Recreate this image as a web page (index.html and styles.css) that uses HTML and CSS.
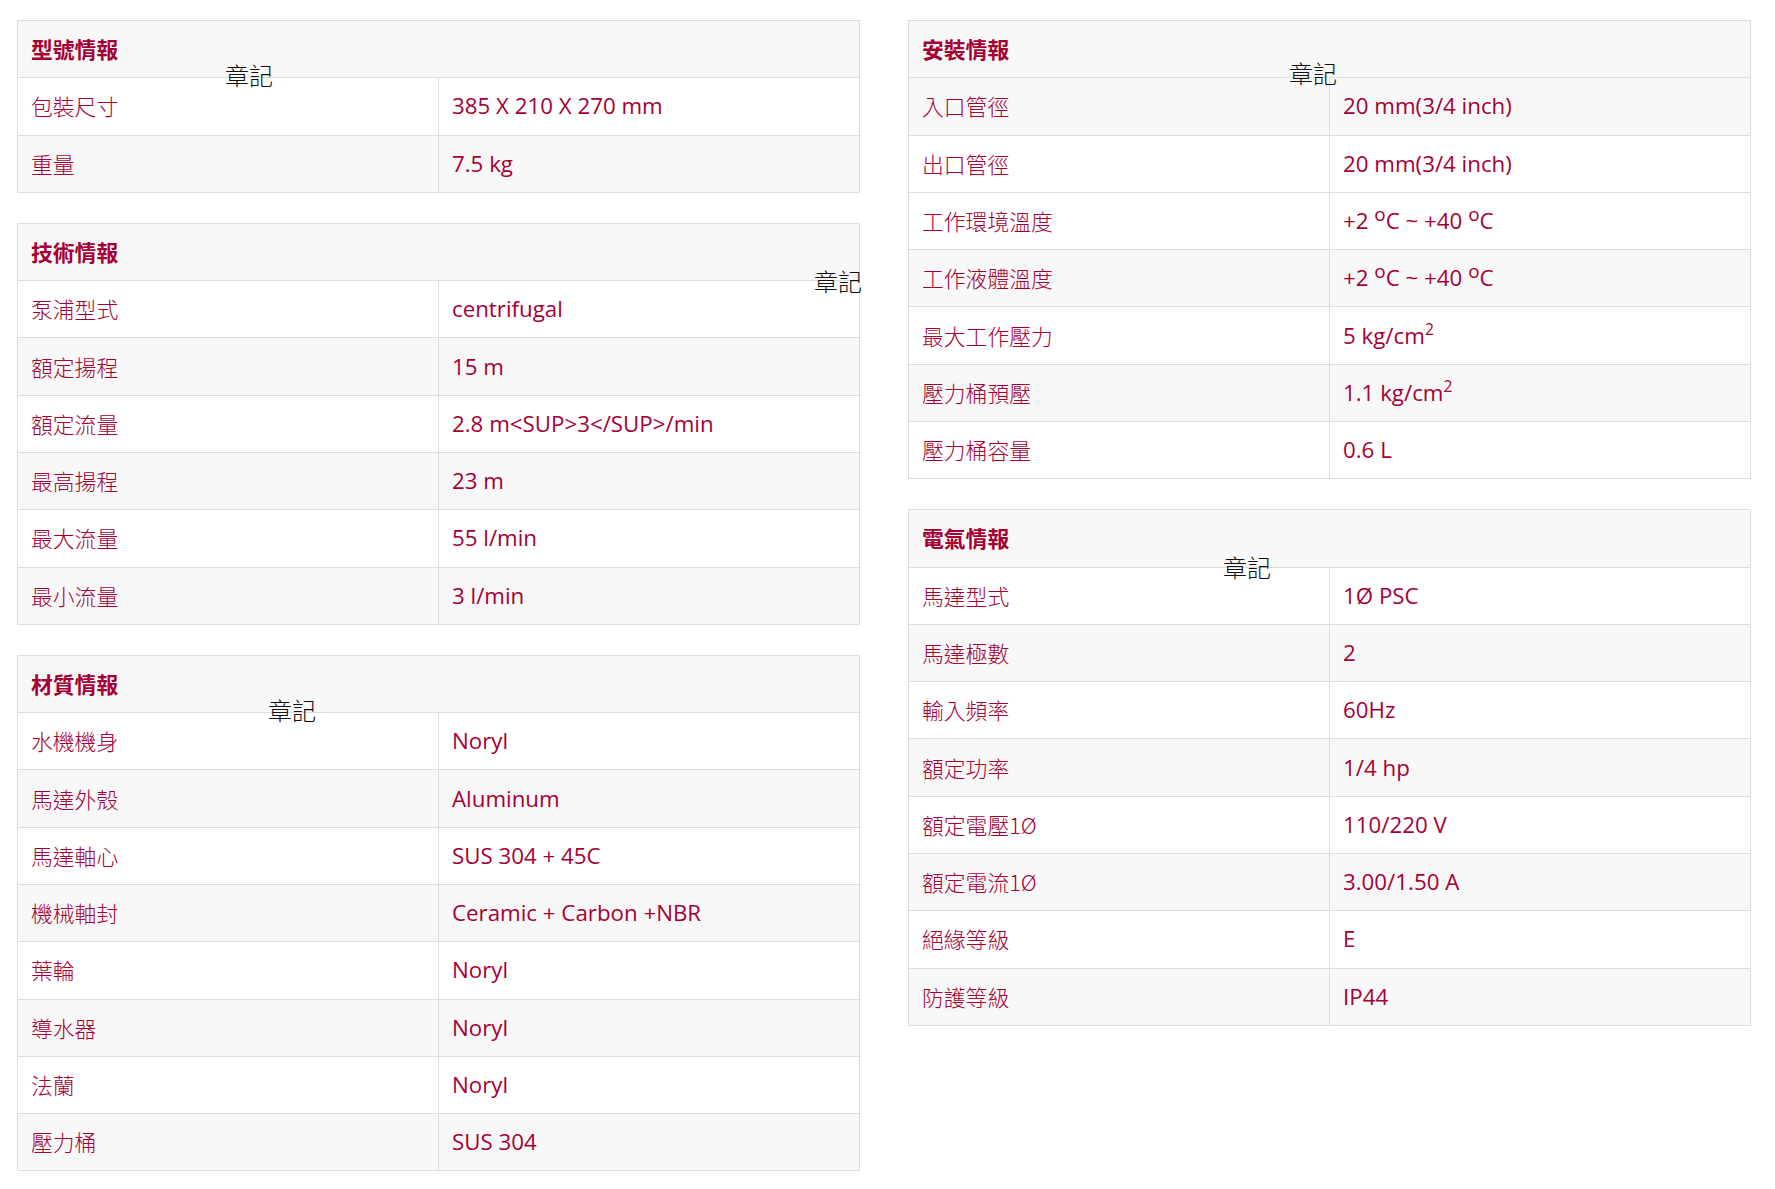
FILE: index.html
```html
<!DOCTYPE html>
<html lang="zh-Hant">
<head>
<meta charset="utf-8">
<title>規格</title>
<link rel="stylesheet" href="styles.css">
</head>
<body>
<div class="page">
  <div class="col">
    <div class="spec">
      <span class="stamp stamp-a">章記</span>
      <table class="spec-table">
        <tr class="head"><th colspan="2">型號情報</th></tr>
        <tr><td>包裝尺寸</td><td>385 X 210 X 270 mm</td></tr>
        <tr class="alt"><td>重量</td><td>7.5 kg</td></tr>
      </table>
    </div>
    <div class="spec">
      <span class="stamp stamp-b">章記</span>
      <table class="spec-table">
        <tr class="head"><th colspan="2">技術情報</th></tr>
        <tr><td>泵浦型式</td><td>centrifugal</td></tr>
        <tr class="alt"><td>額定揚程</td><td>15 m</td></tr>
        <tr><td>額定流量</td><td>2.8 m&lt;SUP&gt;3&lt;/SUP&gt;/min</td></tr>
        <tr class="alt"><td>最高揚程</td><td>23 m</td></tr>
        <tr><td>最大流量</td><td>55 l/min</td></tr>
        <tr class="alt"><td>最小流量</td><td>3 l/min</td></tr>
      </table>
    </div>
    <div class="spec">
      <span class="stamp stamp-c">章記</span>
      <table class="spec-table">
        <tr class="head"><th colspan="2">材質情報</th></tr>
        <tr><td>水機機身</td><td>Noryl</td></tr>
        <tr class="alt"><td>馬達外殼</td><td>Aluminum</td></tr>
        <tr><td>馬達軸心</td><td>SUS 304 + 45C</td></tr>
        <tr class="alt"><td>機械軸封</td><td>Ceramic + Carbon +NBR</td></tr>
        <tr><td>葉輪</td><td>Noryl</td></tr>
        <tr class="alt"><td>導水器</td><td>Noryl</td></tr>
        <tr><td>法蘭</td><td>Noryl</td></tr>
        <tr class="alt"><td>壓力桶</td><td>SUS 304</td></tr>
      </table>
    </div>
  </div>
  <div class="col">
    <div class="spec">
      <span class="stamp stamp-d">章記</span>
      <table class="spec-table">
        <tr class="head"><th colspan="2">安裝情報</th></tr>
        <tr class="alt"><td>入口管徑</td><td>20 mm(3/4 inch)</td></tr>
        <tr><td>出口管徑</td><td>20 mm(3/4 inch)</td></tr>
        <tr><td>工作環境溫度</td><td>+2 <sup class="deg">o</sup>C ~ +40 <sup class="deg">o</sup>C</td></tr>
        <tr class="alt"><td>工作液體溫度</td><td>+2 <sup class="deg">o</sup>C ~ +40 <sup class="deg">o</sup>C</td></tr>
        <tr><td>最大工作壓力</td><td>5 kg/cm<sup>2</sup></td></tr>
        <tr class="alt"><td>壓力桶預壓</td><td>1.1 kg/cm<sup>2</sup></td></tr>
        <tr><td>壓力桶容量</td><td>0.6 L</td></tr>
      </table>
    </div>
    <div class="spec">
      <span class="stamp stamp-e">章記</span>
      <table class="spec-table">
        <tr class="head"><th colspan="2">電氣情報</th></tr>
        <tr><td>馬達型式</td><td>1Ø PSC</td></tr>
        <tr class="alt"><td>馬達極數</td><td>2</td></tr>
        <tr><td>輸入頻率</td><td>60Hz</td></tr>
        <tr class="alt"><td>額定功率</td><td>1/4 hp</td></tr>
        <tr><td>額定電壓1Ø</td><td>110/220 V</td></tr>
        <tr class="alt"><td>額定電流1Ø</td><td>3.00/1.50 A</td></tr>
        <tr><td>絕緣等級</td><td>E</td></tr>
        <tr class="alt"><td>防護等級</td><td>IP44</td></tr>
      </table>
    </div>
  </div>
</div>
</body>
</html>
```

FILE: styles.css
```css
html, body {
  margin: 0;
  padding: 0;
  background: #ffffff;
}

.page {
  display: grid;
  grid-template-columns: 843px 843px;
  column-gap: 48px;
  align-items: start;
  padding: 20px 0 0 17px;
  font-family: "Open Sans", "Noto Sans CJK TC", sans-serif;
  color: #a50034;
}

.col {
  display: flex;
  flex-direction: column;
  gap: 30px;
}

.spec {
  position: relative;
}

.spec-table {
  width: 100%;
  border-collapse: collapse;
  table-layout: fixed;
  border: 1px solid #dddddd;
  font-size: 22.3px;
  line-height: 28px;
}

.spec-table th,
.spec-table td {
  border: 1px solid #dddddd;
  padding: 14.15px 13px;
  text-align: left;
  vertical-align: middle;
}

.spec-table th {
  font-weight: bold;
  font-size: 21.8px;
  background: #f8f8f8;
  font-family: "Noto Sans CJK TC", sans-serif;
}

.spec-table td:first-child {
  width: 50%;
  font-size: 21.8px;
  font-family: "Noto Sans CJK TC", sans-serif;
  font-weight: 300;
}

.spec-table tr.alt td {
  background: #f8f8f8;
}

.spec-table sup {
  font-size: 0.7em;
  line-height: 0;
  vertical-align: 0.55em;
}

.spec-table sup.deg {
  font-size: 0.85em;
  vertical-align: 0.4em;
}

.stamp {
  position: absolute;
  font-family: "Noto Sans CJK TC", sans-serif;
  font-size: 24px;
  line-height: 24px;
  color: #111111;
  font-weight: 300;
  white-space: nowrap;
  z-index: 2;
}

.stamp-a { left: 208px; top: 43px; }
.stamp-b { left: 797px; top: 46px; }
.stamp-c { left: 251px; top: 43px; }
.stamp-d { left: 381px; top: 41px; }
.stamp-e { left: 315px; top: 46px; }
```
